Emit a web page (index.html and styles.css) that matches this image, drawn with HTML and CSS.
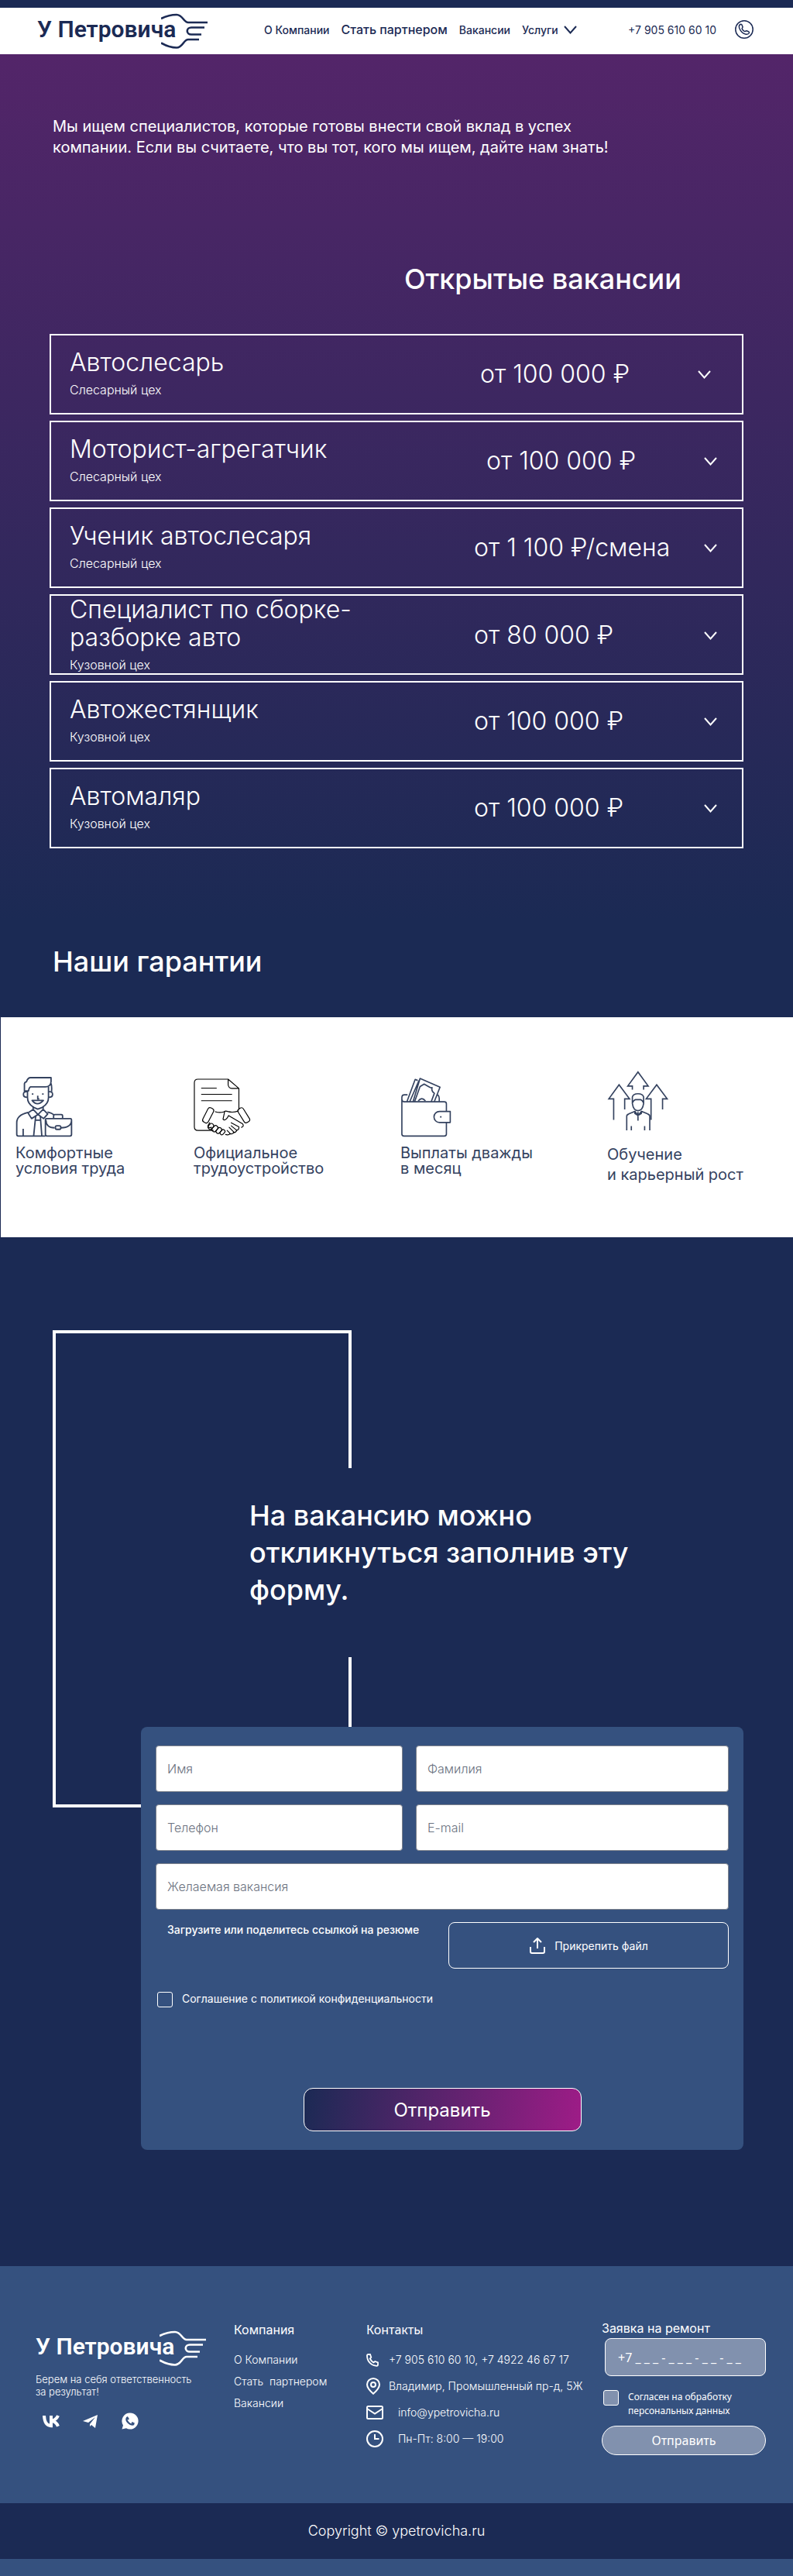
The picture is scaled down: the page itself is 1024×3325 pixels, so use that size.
FILE: index.html
```html
<!DOCTYPE html>
<html lang="ru">
<head>
<meta charset="utf-8">
<meta name="viewport" content="width=device-width, initial-scale=1">
<title>Вакансии — У Петровича</title>
<link rel="stylesheet" href="styles.css">
</head>
<body>
<svg class="sprite" aria-hidden="true">
  <symbol id="wrench" viewBox="0 0 60 46">
    <g fill="none" stroke="currentColor" stroke-width="2.6">
      <path d="M0 7C8 3 14 2 20 2c8 0 9 10 15 10h25"/>
      <path d="M56 18.500H39a5 4.300 0 0 0 0 9h13"/>
      <path d="M49 34H35c-6 0-7 10.500-15 10.500-6 0-12-1.500-20-6"/>
    </g>
  </symbol>
  <symbol id="chevron" viewBox="0 0 17 11"><path d="M1 1l7.500 8.500L16 1" fill="none" stroke="currentColor" stroke-width="2"/></symbol>
</svg>

<header class="header">
  <a class="logo" href="#">У Петровича<svg width="60" height="46"><use href="#wrench"/></svg></a>
  <nav class="nav">
    <a href="#">О Компании</a>
    <a class="nav-accent" href="#">Стать партнером</a>
    <a href="#">Вакансии</a>
    <a class="nav-drop" href="#">Услуги <svg width="17" height="11"><use href="#chevron"/></svg></a>
  </nav>
  <a class="header-phone" href="tel:+79056106010">+7 905 610 60 10
    <svg width="24" height="24" viewBox="0 0 24 24" fill="none" stroke="currentColor"><circle cx="12" cy="12" r="11.200" stroke-width="1.500"/><path d="M7 5.500c-2 1-2 3-1 5.500 1.500 3.500 4 6 7.500 7 2 .5 4 .3 5-1.500.3-1-.3-1.500-1.500-2l-2-.7c-1-.2-1.500 1-2.300.8-1.500-.6-2.700-1.800-3.500-3.500-.3-1 1-1.300.8-2.300l-.8-2.300C8.700 5.500 8 5 7 5.500z" stroke-width="1.500"/></svg>
  </a>
</header>

<main>
  <section class="vacancies">
    <p class="intro">Мы ищем специалистов, которые готовы внести свой вклад в успех компании. Если вы считаете, что вы тот, кого мы ищем, дайте нам знать!</p>
    <h2 class="vacancies-title">Открытые вакансии</h2>
    <ul class="jobs">
      <li class="job job-first"><div class="job-name"><h3>Автослесарь</h3><p>Слесарный цех</p></div><span class="job-pay">от 100 000 ₽</span><button class="job-open" aria-label="Подробнее"><svg width="17" height="11"><use href="#chevron"/></svg></button></li>
      <li class="job job-second"><div class="job-name"><h3>Моторист-агрегатчик</h3><p>Слесарный цех</p></div><span class="job-pay">от 100 000 ₽</span><button class="job-open" aria-label="Подробнее"><svg width="17" height="11"><use href="#chevron"/></svg></button></li>
      <li class="job"><div class="job-name"><h3>Ученик автослесаря</h3><p>Слесарный цех</p></div><span class="job-pay">от 1 100 ₽/смена</span><button class="job-open" aria-label="Подробнее"><svg width="17" height="11"><use href="#chevron"/></svg></button></li>
      <li class="job"><div class="job-name"><h3>Специалист по сборке-<br>разборке авто</h3><p>Кузовной цех</p></div><span class="job-pay">от 80 000 ₽</span><button class="job-open" aria-label="Подробнее"><svg width="17" height="11"><use href="#chevron"/></svg></button></li>
      <li class="job"><div class="job-name"><h3>Автожестянщик</h3><p>Кузовной цех</p></div><span class="job-pay">от 100 000 ₽</span><button class="job-open" aria-label="Подробнее"><svg width="17" height="11"><use href="#chevron"/></svg></button></li>
      <li class="job"><div class="job-name"><h3>Автомаляр</h3><p>Кузовной цех</p></div><span class="job-pay">от 100 000 ₽</span><button class="job-open" aria-label="Подробнее"><svg width="17" height="11"><use href="#chevron"/></svg></button></li>
    </ul>
    <h2 class="perks-title">Наши гарантии</h2>
  </section>

  <ul class="perks">
    <li>
      <svg width="74" height="78" viewBox="56 59 222 236" fill="none" stroke="#34425f" stroke-width="5.500" stroke-linejoin="round">
        <path d="M90 114V86q1-7 8-8 5-16 16-16h80v16q-2 20-22 20h-58q-6 2-8 16zM192 82q6 8 4 34"/>
        <path d="M102 114v26q0 24 24 38l16 7 18-7q24-14 24-38V98M100 117q-14-2-14 10t15 12M186 117q14-2 14 10t-15 12"/>
        <path d="M142 132v13h6M120 151q20 26 44 0zM119 126h6M159 126h6"/>
        <path d="M124 174v12l19 20 20-20v-12M124 186l-20 14 14 22 25-16 22 16 16-18-18-18"/>
        <path d="M104 198q-44 10-44 40v46q0 6 6 6h106M180 196q18 4 26 12M85 262v28M134 211l-8 79M152 211l6 79M134 228h18"/>
        <path d="M176 222h94q4 0 4 6v56q0 6-6 6h-90q-6 0-6-6v-56q0-6 4-6zM204 220v-10q0-4 5-4h25q5 0 5 4v10M174 228q0 30 34 30M274 228q0 30-42 30"/>
        <rect x="211" y="250" width="21" height="14" rx="5"/>
      </svg>
      <p>Комфортные<br>условия труда</p>
    </li>
    <li>
      <svg width="74" height="78" viewBox="750 59 222 236" fill="none" stroke="#000" stroke-width="3.500" stroke-linejoin="round" stroke-linecap="round">
        <path d="M826 268h-60q-14 0-14-14V82q0-14 14-14h118l42 36v82M884 68v22q2 14 14 14h28M780 103h58M780 127h118M780 152h118"/>
        <rect x="794" y="178" width="24" height="62" rx="9" transform="rotate(27 806 209)"/>
        <rect x="933" y="178" width="24" height="62" rx="9" transform="rotate(-32 945 209)"/>
        <path d="M834 195q18 6 34 0 6-4 14-1 20 6 42-2M812 238l-7 12q0 10 14 6M870 196l-6 28q6 8 16-4l6-10 54 32q8 10-4 14M896 238l30 16q2 12-10 14M896 250l22 18q-4 10-14 8M888 256l18 18q-2 10-16 7M880 268l12 12q-6 8-18 4"/>
        <rect x="808" y="240" width="17" height="24" rx="8" transform="rotate(42 816 252)"/>
        <rect x="824" y="248" width="17" height="26" rx="8" transform="rotate(42 832 261)"/>
        <rect x="840" y="256" width="16" height="25" rx="8" transform="rotate(42 848 268)"/>
        <rect x="855" y="264" width="14" height="22" rx="7" transform="rotate(42 862 275)"/>
      </svg>
      <p>Официальное<br>трудоустройство</p>
    </li>
    <li>
      <svg width="66" height="78" viewBox="49 59 198 236" fill="none" stroke="#34425f" stroke-width="5" stroke-linejoin="round">
        <path d="M228 194v-30q0-8-8-8H62q-8-1-8-10v-6q0-11 10-11h12M54 142v140q0 8 8 8h158q8 0 8-8v-44M243 194v43h-42a21 21 0 0 1 0-43zM203 215h6"/>
        <path d="M74 155l32-86 10 4M85 155l36-82M98 155l27-90 78 34-22 56M104 155l21-58 16-10q30 18 31 14-4 14 9 22l-12 32M192 128q10 4 8 27M118 153q14-18 28 0"/>
      </svg>
      <p>Выплаты дважды<br>в месяц</p>
    </li>
    <li class="perk-growth">
      <svg width="79" height="78" viewBox="850 36 238 236" fill="none" stroke="#34425f" stroke-width="5">
        <path d="M948 110V96h-18l40-55 40 55h-18v14M875 228v-82h-19l40-55 41 55h-19v41M1021 228v-82h-19l41-55 41 55h-18v41"/>
        <path d="M948 164v-25q3-13 22-13t22 13v25q-4 28-22 28t-22-28zM948 162q6-12 12-13h20q6 1 12 13"/>
        <path d="M926 269v-55q0-6 8-9l24-10 12 16 14-16 24 10q8 3 8 9v55M944 252v17M996 252v17M958 193v10l12 8 13-8v-10M970 197v34"/>
      </svg>
      <p>Обучение<br>и карьерный рост</p>
    </li>
  </ul>

  <section class="apply">
    <div class="frame" aria-hidden="true"></div>
    <h2 class="apply-title">На вакансию можно откликнуться заполнив эту форму.</h2>
    <form class="form">
      <input type="text" placeholder="Имя" aria-label="Имя">
      <input type="text" placeholder="Фамилия" aria-label="Фамилия">
      <input type="tel" placeholder="Телефон" aria-label="Телефон">
      <input type="email" placeholder="E-mail" aria-label="E-mail">
      <input class="wide" type="text" placeholder="Желаемая вакансия" aria-label="Желаемая вакансия">
      <div class="resume wide">
        <p id="resume-note">Загрузите или поделитесь ссылкой на резюме</p>
        <button class="attach" type="button" aria-describedby="resume-note">
          <svg width="22" height="22" viewBox="0 0 22 22" fill="none" stroke="currentColor" stroke-width="2" stroke-linejoin="round"><path d="M11 15V2M6 7l5-5 5 5M2 13v6q0 2 2 2h14q2 0 2-2v-6"/></svg>
          Прикрепить файл
        </button>
      </div>
      <label class="consent wide"><input type="checkbox">Соглашение с политикой конфиденциальности</label>
      <button class="submit wide" type="submit">Отправить</button>
    </form>
  </section>
</main>

<footer class="footer">
  <div class="footer-brand">
    <a class="logo" href="#">У Петровича<svg width="60" height="46"><use href="#wrench"/></svg></a>
    <p>Берем на себя ответственность<br>за результат!</p>
    <div class="social">
      <a href="#" aria-label="ВКонтакте"><svg width="22" height="22" viewBox="0 0 22 22" fill="none" stroke="currentColor" stroke-width="4"><path d="M2 4c.3 7.500 3 13 9 13.200V4M20 4c-1.500 3.500-4 6-9 6.700 5 .5 7.500 3 9 7"/></svg></a>
      <a href="#" aria-label="Telegram"><svg width="22" height="22" viewBox="0 0 22 22" fill="currentColor"><path d="M1 11L20 3l-3 17-5-4-2 2-2-5-7-2zM8 13l9-7-7 9v3z" fill-rule="evenodd"/></svg></a>
      <a href="#" aria-label="WhatsApp"><svg width="22" height="22" viewBox="0 0 22 22"><path d="M11 .5a10.500 10.500 0 1 1-5 19.700L.5 21.500 2 16.500A10.500 10.500 0 0 1 11 .5z" fill="currentColor"/><path d="M7 6.500c-2.500 4 4.500 11 9 8.500M7 5.500l2 3.500M13 13l3.500 1.500" fill="none" stroke="#35517f" stroke-width="2.200"/></svg></a>
    </div>
  </div>
  <nav class="footer-links">
    <h4>Компания</h4>
    <a href="#">О Компании</a>
    <a href="#">Стать&nbsp; партнером</a>
    <a href="#">Вакансии</a>
  </nav>
  <address class="contacts">
    <h4 class="noto">Контакты</h4>
    <p><svg width="16" height="17" viewBox="0 0 16 17" fill="none" stroke="currentColor" stroke-width="1.800"><path d="M1 2.500Q1 1 2.500 1H5l1.300 3.800L4.800 6.500q1.500 3.200 4.700 5l1.700-1.500 3.800 1.400V14q0 1.800-1.500 1.800C6.500 15.800 1 10 1 2.500z"/></svg><span>+7 905 610 60 10, +7 4922 46 67 17</span></p>
    <p><svg width="18" height="22" viewBox="0 0 18 22" fill="none" stroke="currentColor" stroke-width="2"><path d="M9 20.700Q1 14 1 8.800a8 7.800 0 0 1 16 0Q17 14 9 20.700z"/><circle cx="9" cy="9" r="3"/></svg><span>Владимир, Промышленный пр-д, 5Ж</span></p>
    <p class="contact-wide"><svg width="22" height="18" viewBox="0 0 22 18" fill="none" stroke="currentColor" stroke-width="2"><rect x="1" y="1" width="20" height="16" rx="1.500"/><path d="M1 4l10 6.500L21 4"/></svg><span>info@ypetrovicha.ru</span></p>
    <p class="contact-wide"><svg width="22" height="22" viewBox="0 0 22 22" fill="none" stroke="currentColor" stroke-width="2"><circle cx="11" cy="11" r="10"/><path d="M11 5v6h5.500"/></svg><span>Пн-Пт: 8:00 — 19:00</span></p>
  </address>
  <form class="callback">
    <label for="callback-phone">Заявка на ремонт</label>
    <input id="callback-phone" class="noto" type="tel" placeholder="+7 _ _ _ - _ _ _ - _ _ - _ _">
    <label class="callback-consent noto"><input type="checkbox"><span>Согласен на обработку персональных данных</span></label>
    <button class="noto" type="submit">Отправить</button>
  </form>
</footer>
<p class="copyright">Copyright © ypetrovicha.ru</p>
</body>
</html>
```
FILE: styles.css
```css
* { box-sizing: border-box; }

body {
  margin: 0;
  padding-bottom: 22px;
  background: #35517f;
  color: #fff;
  font-family: Inter, "Open Sans", sans-serif;
}

h2, h3, h4, p, ul { margin: 0; padding: 0; font-weight: 400; }
ul { list-style: none; }
a { color: inherit; text-decoration: none; }
svg { display: block; flex: none; }
button, input { font: inherit; color: inherit; }
button { cursor: pointer; }

.sprite { position: absolute; width: 0; height: 0; }
.noto { font-family: "Noto Sans", sans-serif; }

/* The wrench outline wraps round the end of the name */
.logo {
  position: relative;
  display: block;
  width: 220px;
  font: 600 30px/42px Roboto, sans-serif;
  white-space: nowrap;
}
.logo svg { position: absolute; top: 0; right: 0; }

/* Header */
.header {
  display: flex;
  align-items: center;
  height: 70px;
  padding: 0 51px 4px 48px;
  border-top: 10px solid #1b2a54;
  background: #fff;
  color: #1b2a54;
  font-size: 14px;
  font-weight: 500;
}
.nav { display: flex; align-items: center; gap: 15px; margin-left: 73px; white-space: nowrap; }
.nav-accent { font-size: 16px; }
.nav-drop { display: flex; align-items: center; gap: 7px; }
.header-phone { display: flex; align-items: center; gap: 24px; margin-left: auto; font-weight: 400; white-space: nowrap; }

/* Vacancies */
.vacancies {
  padding: 80px 64px 48px;
  background: linear-gradient(#532569, #1b2a54 90%);
}
.intro { max-width: 752px; padding-left: 4px; font-size: 20px; line-height: 27px; }
.vacancies-title { margin: 132px 0 46px; padding-left: 458px; font-size: 36px; font-weight: 500; line-height: 49px; }
.jobs { display: grid; gap: 8px; }
.job {
  display: grid;
  grid-template-columns: 522px 1fr auto;
  align-items: center;
  height: 104px;
  padding: 0 32px 0 24px;
  border: 2px solid #fff;
  font-size: 32px;
  font-weight: 300;
}
.job-first { grid-template-columns: 530px 1fr auto; padding-right: 40px; }
.job-second { grid-template-columns: 538px 1fr auto; }
.job h3 { font-size: 32px; font-weight: 300; line-height: 36px; }
.job-name p { padding-top: 4px; font-size: 16px; font-weight: 300; line-height: 26px; }
.job-pay { padding-bottom: 2px; white-space: nowrap; }
.job-open { padding: 0; border: 0; background: none; }
.perks-title { margin-top: 122px; padding-left: 4px; font-size: 36px; font-weight: 500; line-height: 48px; }

/* Guarantees */
.perks {
  display: grid;
  grid-template-columns: 230px 267px 267px 1fr;
  align-items: start;
  height: 284px;
  padding: 77px 0 0 19px;
  border-left: 1px solid #1b2a54;
  background: #fff;
  color: #34425f;
  font-size: 20px;
  line-height: 20px;
}
.perks p { margin-top: 10px; }
.perks .perk-growth { margin-top: -8px; line-height: 26px; }
.perks .perk-growth p { margin-top: 17px; }

/* Application form */
.apply { position: relative; padding: 335px 64px 150px 182px; background: #1b2a54; }
.frame {
  position: absolute;
  top: 120px;
  left: 68px;
  width: 386px;
  height: 616px;
  border: 4px solid #fff;
  border-right: 0;
}
.frame::before, .frame::after { content: ""; position: absolute; right: 0; width: 4px; background: #fff; }
.frame::before { top: 0; height: 174px; }
.frame::after { top: 418px; height: 100px; }
.apply-title { position: relative; max-width: 680px; margin-bottom: 153px; padding-left: 140px; font-size: 36px; font-weight: 500; line-height: 48px; }
.form {
  position: relative;
  display: grid;
  grid-template-columns: 319px 1fr;
  gap: 16px 17px;
  padding: 24px 19px;
  border-radius: 8px;
  background: #35517f;
  font-size: 14px;
}
.form .wide { grid-column: 1 / -1; }
.form > input {
  width: 100%;
  height: 60px;
  padding: 0 14px;
  border: 1px solid #7d828c;
  border-radius: 4px;
  background: #fff;
  color: #1b2a54;
  font-size: 16px;
  font-weight: 300;
}
.form > input::placeholder { color: #6b7280; opacity: 1; }
.resume { display: flex; justify-content: space-between; padding-left: 15px; }
.resume p { font-weight: 500; line-height: 20px; }
.attach {
  display: flex;
  align-items: center;
  justify-content: center;
  gap: 11px;
  width: 362px;
  height: 60px;
  border: 1px solid #fff;
  border-radius: 8px;
  background: none;
}
.consent { display: flex; gap: 12px; margin: 12px 0 88px; padding-left: 2px; line-height: 22px; }
.consent input, .callback-consent input {
  flex: none;
  appearance: none;
  width: 20px;
  height: 20px;
  margin: 2px 0 0;
  border: 1px solid #fff;
  border-radius: 3px;
}
.submit {
  justify-self: center;
  width: 359px;
  height: 56px;
  border: 1px solid #fff;
  border-radius: 12px;
  background: linear-gradient(100deg, #1b2a54, #9e1c87);
  font-size: 24px;
}

/* Footer */
.footer {
  display: grid;
  grid-template-columns: 256px 171px 304px 1fr;
  align-items: start;
  min-height: 306px;
  padding: 68px 35px 60px 46px;
  font-size: 14px;
}
.footer h4 { font-size: 16px; line-height: 24px; }
.footer-brand { padding-top: 15px; }
.footer-brand p { margin-top: 13px; font-size: 13px; font-weight: 300; line-height: 16px; white-space: nowrap; }
.social { display: flex; gap: 29px; margin: 19px 0 0 9px; }
.footer-links { display: grid; padding-top: 2px; font-weight: 300; line-height: 28px; }
.footer-links h4 { margin-bottom: 13px; }
.contacts { display: grid; padding-top: 2px; font-style: normal; font-weight: 300; line-height: 20px; }
.contacts h4 { margin-bottom: 10px; }
.contacts p { display: grid; grid-template-columns: 29px 1fr; align-items: center; height: 34px; font-weight: 300; white-space: nowrap; }
.contacts .contact-wide { grid-template-columns: 41px 1fr; }
.callback { display: grid; font-size: 16px; line-height: 24px; }
.callback > input {
  width: auto;
  min-width: 0;
  height: 49px;
  margin: 1px 0 18px 4px;
  padding: 0 16px;
  border: 1px solid #fff;
  border-radius: 8px;
  background: #8191ae;
  font-size: 16px;
}
.callback > input::placeholder { color: #fff; opacity: 1; }
.callback-consent { display: flex; gap: 12px; padding-left: 2px; font-size: 12px; line-height: 18px; }
.callback-consent input { margin: 0; background: #8191ae; }
.callback button {
  height: 38px;
  margin-top: 10px;
  border: 1px solid #fff;
  border-radius: 19px;
  background: #8191ae;
}
.copyright { padding: 24px; background: #1b2a54; font-size: 18px; font-weight: 300; line-height: 24px; text-align: center; }
```
